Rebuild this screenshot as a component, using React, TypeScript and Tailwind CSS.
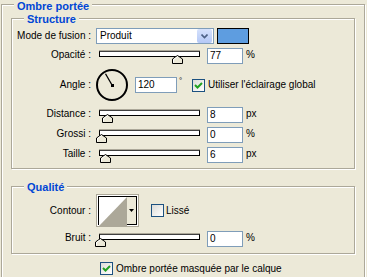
import React from "react";

const label = "w-[84px] shrink-0 pr-[5px] text-right";

function Check({ checked }: { checked: boolean }) {
  return (
    <span className="flex h-[13px] w-[13px] shrink-0 items-center justify-center border border-[#1C5180] bg-linear-to-br from-[#DCDCD7] to-white">
      {checked && (
        <svg width="9" height="9" viewBox="0 0 9 9">
          <path d="M1 4 L3.5 6.5 L8 2" fill="none" stroke="#21A121" strokeWidth="2" />
        </svg>
      )}
    </span>
  );
}

function NumBox({ value, w = "w-[36px]" }: { value: string; w?: string }) {
  return (
    <div className={`${w} h-4 shrink-0 border border-[#7F9DB9] bg-white pl-[2px] leading-[14px]`}>{value}</div>
  );
}

// slider track goes from x+3 to x+103, pos is 0..100
function Slider({ pos }: { pos: number }) {
  return (
    <div className="relative h-4 w-[111px] shrink-0">
      <div className="absolute left-[3px] top-[3px] h-[6px] w-[101px] border border-black border-t-[#404040] bg-white shadow-[0_-1px_0_#ACA899]" />
      <svg className="absolute top-[7px]" style={{ left: pos - 1 }} width="11" height="9" viewBox="0 0 11 9">
        <path d="M0.5 8.5 V4 L5.5 0.5 L10.5 4 V8.5 Z" fill="#ECE9D8" stroke="#000" />
        <path d="M1.5 7.5 V4.5 L5.5 1.7" fill="none" stroke="#fff" />
      </svg>
    </div>
  );
}

function SliderRow({ name, pos, value, unit }: { name: string; pos: number; value: string; unit: string }) {
  return (
    <div className="flex h-4 items-center">
      <span className={`${label} pb-[3px]`}>{name}</span>
      <Slider pos={pos} />
      <NumBox value={value} />
      <span className="ml-[3px] pb-[2px]">{unit}</span>
    </div>
  );
}

function Group({ title, className, children }: { title: string; className?: string; children: React.ReactNode }) {
  return (
    <div className={`ml-[9px] w-[344px] border border-[#ACA899] shadow-[inset_1px_1px_0_#fff,1px_1px_0_#fff] ${className ?? ""}`}>
      <div className="ml-[12px] mt-[-6px] w-fit bg-[#ECE9D8] px-[3px] text-[11px] font-bold leading-[12px] text-[#0046D5]">
        {title}
      </div>
      {children}
    </div>
  );
}

export default function App() {
  return (
    <div className="h-[277px] w-[367px] overflow-hidden bg-[#ECE9D8] pt-[4px] font-['Liberation_Sans',Arial,sans-serif] text-[10px] leading-[12px] text-black">
      <div className="ml-[1px] h-[300px] w-[364px] border border-[#ACA899] shadow-[inset_1px_1px_0_#fff,1px_1px_0_#fff]">
        <div className="ml-[12px] mt-[-5px] w-fit bg-[#ECE9D8] px-[3px] text-[11px] font-bold leading-[12px] text-[#0046D5]">
          Ombre portée
        </div>

        <Group title="Structure" className="mt-[6px] pb-[5px]">
          <div className="mt-[3px] flex h-4 items-center">
            <span className={label}>Mode de fusion :</span>
            <div className="flex h-4 w-[118px] items-center justify-between border border-[#7F9DB9] bg-white pl-[3px] pr-px">
              <span>Produit</span>
              <span className="flex h-[14px] w-[15px] items-center justify-center rounded-[2px] bg-linear-to-b from-[#D6E2FC] to-[#B4C8F6]">
                <svg width="7" height="5" viewBox="0 0 7 5">
                  <path d="M0.5 0.5 L3.5 3.5 L6.5 0.5" fill="none" stroke="#4D6185" strokeWidth="1.6" />
                </svg>
              </span>
            </div>
            <div className="ml-[3px] h-4 w-[32px] border border-black bg-[#5E9DE0]" />
          </div>

          <div className="mt-[4px]">
            <SliderRow name="Opacité :" pos={77} value="77" unit="%" />
          </div>

          <div className="mt-[4px] flex h-[34px] items-center">
            <span className={label}>Angle :</span>
            <svg width="33" height="34" viewBox="0 0 33 34" className="shrink-0">
              <circle cx="16" cy="17" r="15" fill="none" stroke="#000" strokeWidth="2" />
              <line x1="16" y1="17" x2="9.5" y2="5.7" stroke="#000" strokeWidth="1.3" />
              <rect x="15" y="16" width="3" height="3" fill="#000" />
            </svg>
            <div className="ml-[6px]">
              <NumBox value="120" w="w-[42px]" />
            </div>
            <span className="w-[15px] self-start pl-[2px] pt-[9px] text-[8px] leading-[8px]">°</span>
            <Check checked />
            <span className="ml-[3px]">Utiliser l'éclairage global</span>
          </div>

          <div className="mt-[5px] flex flex-col gap-[4px]">
            <SliderRow name="Distance :" pos={7} value="8" unit="px" />
            <SliderRow name="Grossi :" pos={1} value="0" unit="%" />
            <SliderRow name="Taille :" pos={5} value="6" unit="px" />
          </div>
        </Group>

        <Group title="Qualité" className="mt-[17px] pb-[6px]">
          <div className="mt-[1px] flex h-[33px] items-center">
            <span className={label}>Contour :</span>
            <div className="flex h-[33px] w-[43px] shrink-0 border border-[#ACA899] bg-white p-px">
              <div className="flex flex-1 border border-black">
                <svg width="28" height="29" viewBox="0 0 28 29" className="shrink-0">
                  <rect width="28" height="29" fill="#fff" />
                  <polygon points="0,29 28,0 28,29" fill="#ACA899" />
                </svg>
                <div className="flex flex-1 items-center justify-center bg-[#ECE9D8]">
                  <svg width="5" height="3" viewBox="0 0 5 3">
                    <polygon points="0,0 5,0 2.5,3" fill="#000" />
                  </svg>
                </div>
              </div>
            </div>
            <div className="ml-[12px]">
              <Check checked={false} />
            </div>
            <span className="ml-[2px]">Lissé</span>
          </div>
          <div className="mt-[4px]">
            <SliderRow name="Bruit :" pos={0} value="0" unit="%" />
          </div>
        </Group>

        <div className="mt-[8px] flex items-center pl-[98px]">
          <Check checked />
          <span className="ml-[3px]">Ombre portée masquée par le calque</span>
        </div>
      </div>
    </div>
  );
}
